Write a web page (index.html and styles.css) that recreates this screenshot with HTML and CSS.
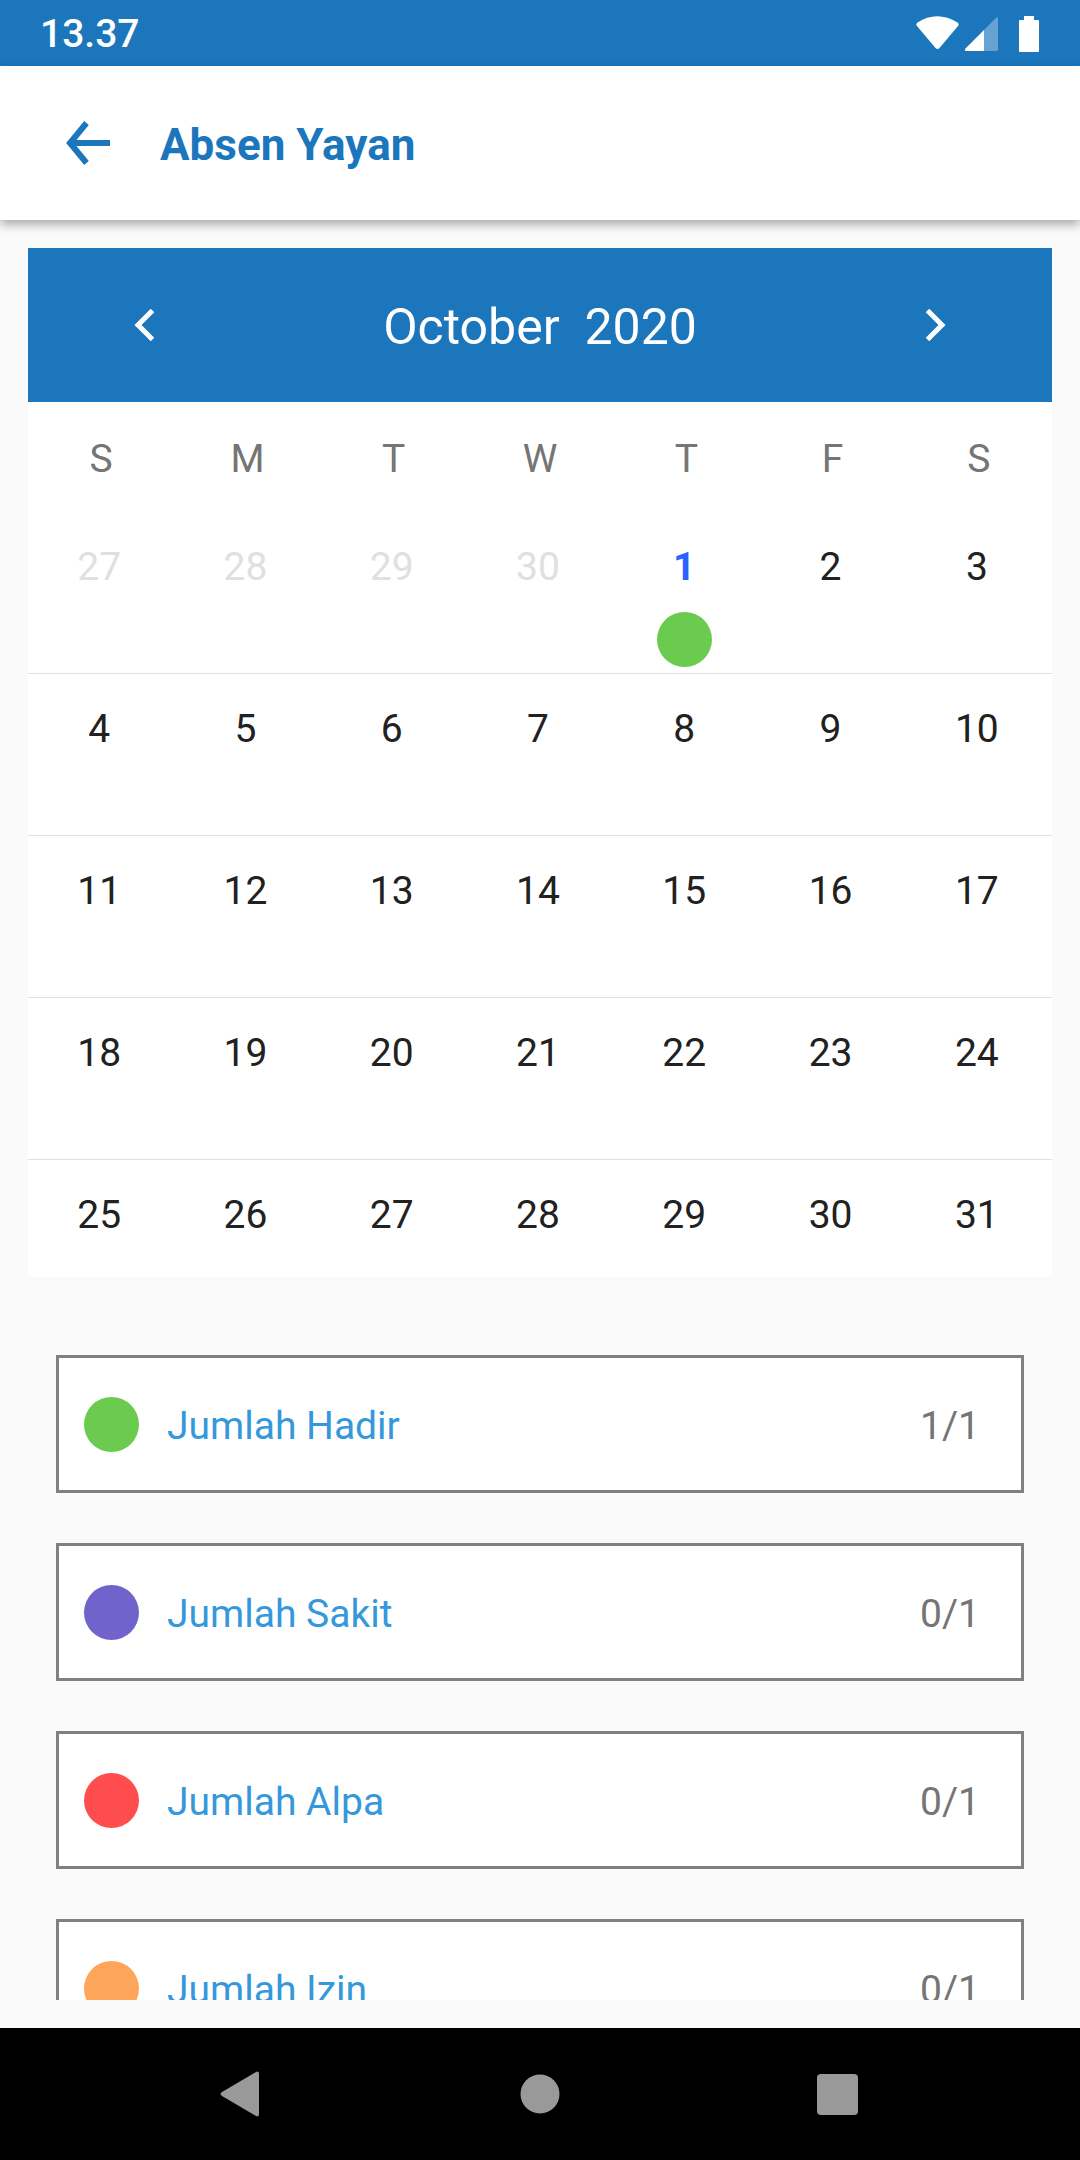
FILE: index.html
```
<!DOCTYPE html>
<html lang="id">
<head>
  <meta charset="UTF-8">
  <meta name="viewport" content="width=device-width, initial-scale=1.0">
  <title>Absen Yayan</title>
  <link rel="stylesheet" href="styles.css">
</head>
<body>
  <!-- Status bar -->
  <div class="status-bar">
    <span class="time">13.37</span>
    <svg class="status-icons" width="124" height="38" viewBox="0 0 124 38" fill="#fff" aria-hidden="true">
      <path d="M2.500 7.500Q22 -5 42.500 7.500Q44.500 9 43 11L24.500 33Q22.500 35 20.500 33L2 11Q0.500 9 2.500 7.500Z"/>
      <path d="M81.500 2.500Q83 2 83 3.500V34Q83 36 82 36H69V15Z" opacity="0.33"/>
      <path d="M69 15V36H51Q49 35.500 50.500 33.500Z"/>
      <path d="M109 1H119V5H123Q124 5 124 6V36Q124 37 123 37H105Q104 37 104 36V6Q104 5 105 5H109Z"/>
    </svg>
  </div>

  <!-- Header -->
  <header class="header">
    <button type="button" class="back-button" aria-label="Back">
      <svg width="44" height="44" viewBox="0 0 44 44" fill="none" stroke="#1c76bc" stroke-width="6">
        <path d="M20.500 2L4 22L20.500 42"/>
        <path d="M5 22H44"/>
      </svg>
    </button>
    <h1>Absen Yayan</h1>
  </header>

  <main class="content">
    <!-- Calendar -->
    <section class="calendar">
      <div class="calendar-header">
        <button type="button" aria-label="Previous month">
          <svg width="24" height="36" viewBox="0 0 24 36" fill="none" stroke="#fff" stroke-width="5">
            <path d="M20.500 3.500L6 18L20.500 32.500"/>
          </svg>
        </button>
        <h2>October&nbsp; 2020</h2>
        <button type="button" aria-label="Next month">
          <svg width="24" height="36" viewBox="0 0 24 36" fill="none" stroke="#fff" stroke-width="5">
            <path d="M3.500 3.500L18 18L3.500 32.500"/>
          </svg>
        </button>
      </div>
      <table class="days">
        <thead>
          <tr><th>S</th><th>M</th><th>T</th><th>W</th><th>T</th><th>F</th><th>S</th></tr>
        </thead>
        <tbody>
          <tr>
            <td class="other-month">27</td><td class="other-month">28</td><td class="other-month">29</td><td class="other-month">30</td>
            <td class="today">1<span class="dot hadir"></span></td><td>2</td><td>3</td>
          </tr>
          <tr><td>4</td><td>5</td><td>6</td><td>7</td><td>8</td><td>9</td><td>10</td></tr>
          <tr><td>11</td><td>12</td><td>13</td><td>14</td><td>15</td><td>16</td><td>17</td></tr>
          <tr><td>18</td><td>19</td><td>20</td><td>21</td><td>22</td><td>23</td><td>24</td></tr>
          <tr><td>25</td><td>26</td><td>27</td><td>28</td><td>29</td><td>30</td><td>31</td></tr>
        </tbody>
      </table>
    </section>

    <!-- Attendance totals -->
    <ul class="summary">
      <li><span class="dot hadir"></span><span class="label">Jumlah Hadir</span><span class="count">1/1</span></li>
      <li><span class="dot sakit"></span><span class="label">Jumlah Sakit</span><span class="count">0/1</span></li>
      <li><span class="dot alpa"></span><span class="label">Jumlah Alpa</span><span class="count">0/1</span></li>
      <li><span class="dot izin"></span><span class="label">Jumlah Izin</span><span class="count">0/1</span></li>
    </ul>
  </main>

  <!-- System navigation -->
  <nav class="nav-bar">
    <button type="button" aria-label="Back">
      <svg width="48" height="48" viewBox="0 0 48 48" fill="#999">
        <path d="M37 2Q40 0.500 40 4V44Q40 47.500 37 46L3 26Q0 24 3 22Z"/>
      </svg>
    </button>
    <button type="button" aria-label="Home">
      <svg width="48" height="48" viewBox="0 0 48 48" fill="#999"><circle cx="24" cy="24" r="19.500"/></svg>
    </button>
    <button type="button" aria-label="Recent apps">
      <svg width="48" height="48" viewBox="0 0 48 48" fill="#999"><rect x="4" y="4" width="41" height="41" rx="4"/></svg>
    </button>
  </nav>
</body>
</html>
```
FILE: styles.css
```
* {
  box-sizing: border-box;
}

body {
  font-family: Roboto, sans-serif;
  font-size: 39px;
  line-height: 46px;
  background: #fafafa;
  margin: 0;
  display: flex;
  flex-direction: column;
  height: 100vh;
  color: #212121;
}

button {
  display: flex;
  justify-content: center;
  align-items: center;
  background: none;
  border: none;
  padding: 0;
  cursor: pointer;
}

svg {
  display: block;
}

/* Status bar */
.status-bar {
  display: flex;
  justify-content: space-between;
  align-items: center;
  height: 66px;
  padding: 2px 41px 0 40px;
  background: #1c76bc;
  color: white;
  flex-shrink: 0;
}

.time {
  font-weight: 500;
}

/* Header */
.header {
  display: flex;
  align-items: center;
  gap: 50px;
  height: 154px;
  padding: 0 66px;
  background: white;
  box-shadow: 0 4px 10px rgba(0, 0, 0, 0.35);
  flex-shrink: 0;
}

.header h1 {
  margin: 0;
  padding-top: 4px;
  color: #1c76bc;
  font-size: 44px;
  font-weight: bold;
}

.content {
  flex: 1;
  min-height: 0;
  margin: 28px;
  overflow: hidden;
}

/* Calendar */
.calendar {
  background: white;
}

.calendar-header {
  display: flex;
  justify-content: space-between;
  align-items: center;
  height: 154px;
  padding: 0 104px;
  background: #1c76bc;
  color: white;
}

.calendar-header h2 {
  margin: 0;
  padding-top: 4px;
  font-size: 50px;
  font-weight: normal;
}

.days {
  width: 100%;
  table-layout: fixed;
  border-spacing: 0;
  text-align: center;
}

.days th {
  height: 110px;
  padding: 4px 0 0;
  color: #757575;
  font-weight: normal;
}

.days td {
  height: 162px;
  padding: 32px 4px 0 0;
  vertical-align: top;
  border-bottom: 1px solid #e0e0e0;
}

.days tr:last-child td {
  height: 117px;
  border-bottom: none;
}

.days .other-month {
  color: #e0e0e0;
}

.days .today {
  color: #2962ff;
  font-weight: bold;
}

.days .dot {
  margin: 22px auto 0;
}

.dot {
  display: block;
  width: 55px;
  height: 55px;
  border-radius: 50%;
}

.hadir {
  background: #6bcb4f;
}

.sakit {
  background: #7063cb;
}

.alpa {
  background: #ff4d4d;
}

.izin {
  background: #ffa45b;
}

/* Attendance totals */
.summary {
  list-style: none;
  margin: 78px 28px 0;
  padding: 0;
}

.summary li {
  display: flex;
  align-items: center;
  gap: 28px;
  height: 138px;
  margin-bottom: 50px;
  padding: 0 41px 0 25px;
  background: white;
  border: 3px solid #808080;
}

.label {
  flex: 1;
  padding-top: 4px;
  color: #3498db;
}

.count {
  padding-top: 4px;
  color: #757575;
}

/* System navigation */
.nav-bar {
  display: flex;
  justify-content: center;
  height: 132px;
  background: black;
  flex-shrink: 0;
}

.nav-bar button {
  width: 27.5%;
}
```
